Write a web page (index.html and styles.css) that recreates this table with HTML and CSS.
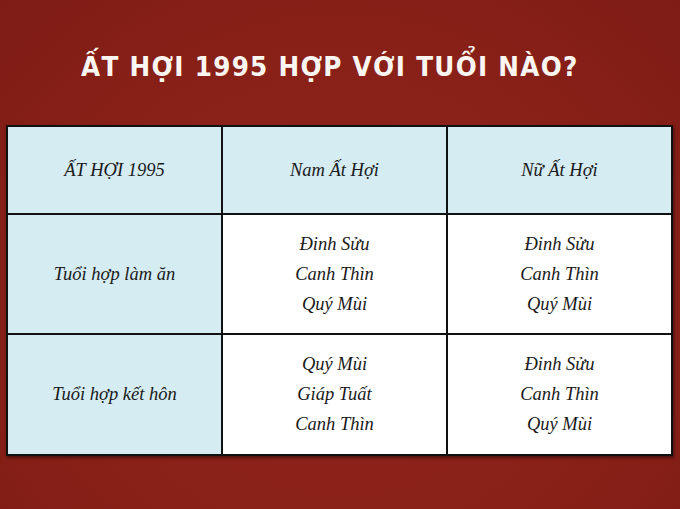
FILE: index.html
```html
<!DOCTYPE html>
<html lang="vi">
<head>
<meta charset="utf-8">
<title>Ất Hợi 1995 hợp với tuổi nào?</title>
<link rel="stylesheet" href="styles.css">
</head>
<body>
<main class="page">
  <h1 class="title">ẤT HỢI 1995 HỢP VỚI TUỔI NÀO?</h1>
  <div class="table">
    <div class="cell head">ẤT HỢI 1995</div>
    <div class="cell head">Nam Ất Hợi</div>
    <div class="cell head">Nữ Ất Hợi</div>

    <div class="cell head">Tuổi hợp làm ăn</div>
    <div class="cell body"><span>Đinh Sửu</span><span>Canh Thìn</span><span>Quý Mùi</span></div>
    <div class="cell body"><span>Đinh Sửu</span><span>Canh Thìn</span><span>Quý Mùi</span></div>

    <div class="cell head">Tuổi hợp kết hôn</div>
    <div class="cell body"><span>Quý Mùi</span><span>Giáp Tuất</span><span>Canh Thìn</span></div>
    <div class="cell body"><span>Đinh Sửu</span><span>Canh Thìn</span><span>Quý Mùi</span></div>
  </div>
</main>
</body>
</html>
```

FILE: styles.css
```css
html, body {
  margin: 0;
  padding: 0;
}
body {
  width: 680px;
  height: 509px;
  overflow: hidden;
  background: radial-gradient(ellipse at 50% 60%, #8f231a 0%, #8a2118 55%, #7e1c15 100%);
}
.page {
  display: flex;
  flex-direction: column;
  align-items: flex-start;
  padding: 52px 0 0 6px;
}
.title {
  align-self: center;
  margin: 0 0 43px -27px;
  font-family: "DejaVu Sans", sans-serif;
  font-weight: bold;
  font-size: 27px;
  line-height: 30px;
  letter-spacing: 1.4px;
  color: #fbf6f2;
  transform: scaleX(0.915);
}
.table {
  display: grid;
  grid-template-columns: 213px 223px 223px;
  grid-template-rows: 86px 118px 119px;
  gap: 2px;
  background: #111;
  border: 2px solid #111;
  width: 663px;
  box-shadow: 1px 2px 3px rgba(0,0,0,0.45);
}
.cell {
  display: flex;
  flex-direction: column;
  align-items: center;
  justify-content: center;
  font-family: "Liberation Serif", serif;
  font-style: italic;
  font-size: 18.5px;
  color: #1a1a1a;
}
.head {
  background: #d6ecf3;
}
.body {
  background: #ffffff;
  gap: 9px;
  line-height: 21px;
}
```
